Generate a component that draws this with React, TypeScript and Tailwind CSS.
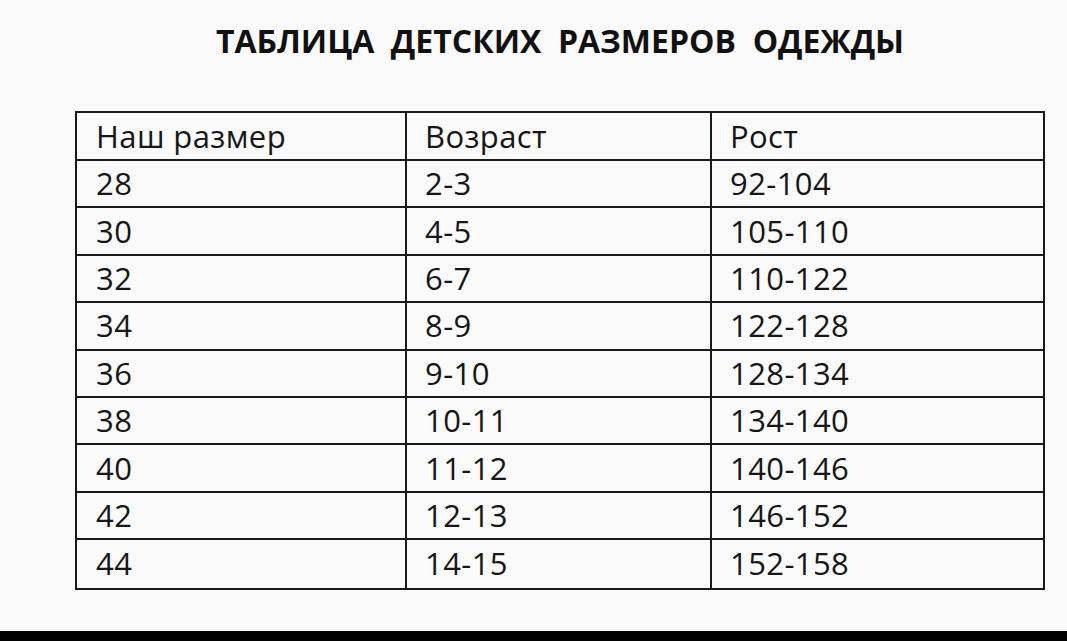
import React from "react";

const rows: [string, string, string][] = [
  ["28", "2-3", "92-104"],
  ["30", "4-5", "105-110"],
  ["32", "6-7", "110-122"],
  ["34", "8-9", "122-128"],
  ["36", "9-10", "128-134"],
  ["38", "10-11", "134-140"],
  ["40", "11-12", "140-146"],
  ["42", "12-13", "146-152"],
  ["44", "14-15", "152-158"],
];

export default function App() {
  const font = { fontFamily: '"Open Sans", "Noto Sans", sans-serif' };
  return (
    <div className="w-[1067px] h-[641px] flex flex-col bg-[#fafafa] overflow-hidden" style={font}>
      <div className="flex-1 flex flex-col pl-[75px]">
        <div className="w-[970px] flex flex-col">
          <h1 className="mt-[19px] text-center text-[32px] leading-[44px] font-bold text-[#111] whitespace-pre">
            {"ТАБЛИЦА  ДЕТСКИХ  РАЗМЕРОВ  ОДЕЖДЫ"}
          </h1>
          <div className="mt-[48px] w-[970px] border-2 border-[#1a1a1a] text-[#161616] text-[31px] tracking-[0.4px]">
            <div className="grid grid-cols-[330px_305px_1fr] h-[48px] border-b-2 border-[#1a1a1a]">
              <div className="pl-[19px] border-r-2 border-[#1a1a1a] flex items-center leading-none">Наш размер</div>
              <div className="pl-[18px] border-r-2 border-[#1a1a1a] flex items-center leading-none">Возраст</div>
              <div className="pl-[18px] flex items-center leading-none">Рост</div>
            </div>
            {rows.map((r, i) => (
              <div
                key={i}
                className={
                  "grid grid-cols-[330px_305px_1fr] h-[47.4px] " +
                  (i < rows.length - 1 ? "border-b-2 border-[#1a1a1a]" : "")
                }
              >
                <div className="pl-[19px] border-r-2 border-[#1a1a1a] flex items-center leading-none">{r[0]}</div>
                <div className="pl-[18px] border-r-2 border-[#1a1a1a] flex items-center leading-none">{r[1]}</div>
                <div className="pl-[18px] flex items-center leading-none">{r[2]}</div>
              </div>
            ))}
          </div>
        </div>
      </div>
      <div className="h-[10px] bg-black" />
    </div>
  );
}
